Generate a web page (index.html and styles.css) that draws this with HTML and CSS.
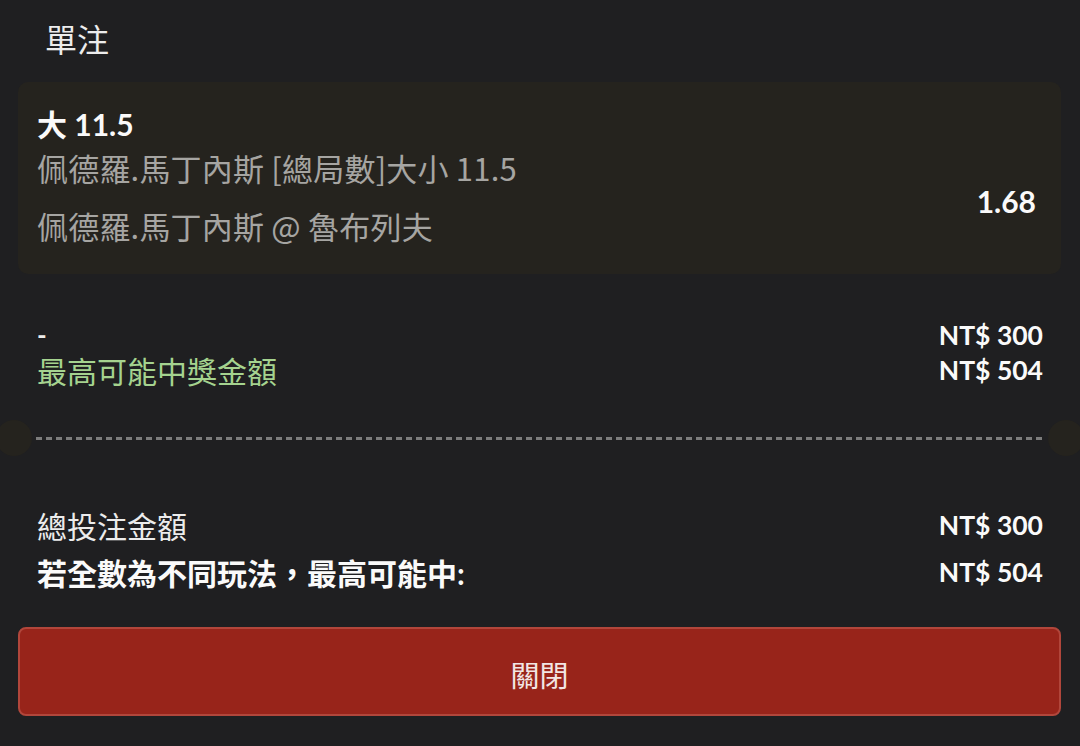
FILE: index.html
```html
<!DOCTYPE html>
<html lang="zh-Hant">
<head>
    <meta charset="UTF-8">
    <meta name="viewport" content="width=device-width, initial-scale=1.0">
    <title>單注</title>
    <link rel="stylesheet" href="styles.css">
</head>
<body>
    <div class="sheet">
        <h1 class="sheet-title">單注</h1>

        <div class="bet-card">
            <div class="bet-pick">大 11.5</div>
            <div class="bet-body">
                <div class="bet-info">
                    <p class="bet-market">佩德羅.馬丁內斯 [總局數]大小 11.5</p>
                    <p class="bet-event">佩德羅.馬丁內斯 @ 魯布列夫</p>
                </div>
                <div class="bet-odds">1.68</div>
            </div>
        </div>

        <div class="summary">
            <div class="row">
                <span class="dash">-</span>
                <span class="amount">NT$ 300</span>
            </div>
            <div class="row">
                <span class="win-label">最高可能中獎金額</span>
                <span class="amount">NT$ 504</span>
            </div>
        </div>

        <div class="divider">
            <span class="notch notch-left"></span>
            <span class="divider-line"></span>
            <span class="notch notch-right"></span>
        </div>

        <div class="totals">
            <div class="total-row">
                <span>總投注金額</span>
                <span class="amount">NT$ 300</span>
            </div>
            <div class="total-row">
                <span class="strong">若全數為不同玩法<span class="punct">，</span>最高可能中:</span>
                <span class="amount">NT$ 504</span>
            </div>
        </div>

        <button class="close-btn" type="button">關閉</button>
    </div>
</body>
</html>
```

FILE: styles.css
```css
body {
    margin: 0;
    background-color: #1f1f21;
    font-family: "Lato", "Noto Sans CJK TC", sans-serif;
    color: #ececec;
    overflow: hidden;
}

.sheet {
    width: 1080px;
    height: 746px;
}

.sheet-title {
    margin: 0 0 22px;
    padding: 20px 0 0 45px;
    font-size: 32px;
    font-weight: normal;
    line-height: 40px;
    color: #ececec;
}

.bet-card {
    margin: 0 19px 0 18px;
    padding: 22px 25px 24px 19px;
    background-color: #25231e;
    border-radius: 10px;
}

.bet-pick {
    font-size: 30px;
    font-weight: bold;
    line-height: 40px;
    color: #fafafa;
}

.bet-body {
    display: flex;
    align-items: center;
    justify-content: space-between;
}

.bet-info p {
    margin: 0;
    font-family: "Noto Sans CJK TC", sans-serif;
    font-size: 31px;
    letter-spacing: 0.2px;
    line-height: 48px;
    color: #a6a5a2;
}

.bet-info .bet-event {
    margin-top: 10px;
}

.bet-odds {
    padding-top: 8px;
    font-size: 30px;
    font-weight: bold;
    color: #fafafa;
}

.summary {
    margin-top: 43px;
    padding: 0 37px;
}

.row, .total-row {
    display: flex;
    justify-content: space-between;
    align-items: center;
}

.row {
    height: 36px;
    font-size: 30px;
}

.row + .row {
    margin-top: -1px;
}

.total-row {
    height: 47px;
    font-size: 30px;
}

.dash {
    font-weight: bold;
    font-size: 26px;
}

.win-label {
    color: #a5d38f;
}

.amount {
    font-size: 26.5px;
    font-weight: bold;
    color: #fafafa;
}

.divider {
    display: flex;
    align-items: center;
    height: 36px;
    margin-top: 32px;
}

.notch {
    flex: none;
    width: 36px;
    height: 36px;
    border-radius: 50%;
    background-color: #25231e;
}

.notch-left {
    margin-left: -4px;
}

.notch-right {
    margin-right: -4px;
}

.divider-line {
    flex: 1;
    height: 3px;
    margin: 0 4px;
    background: repeating-linear-gradient(to right, #7c7c7c 0, #7c7c7c 6px, transparent 6px, transparent 10px);
}

.totals {
    margin-top: 45px;
    padding: 0 37px;
}

.strong {
    font-weight: bold;
    color: #fafafa;
}

.punct {
    font-family: "Noto Sans CJK JP", sans-serif;
}

.close-btn {
    display: block;
    width: 1043px;
    height: 89px;
    margin: 32px 0 0 18px;
    padding: 4px 0 0;
    background-color: #98241a;
    border: 2px solid #b1463b;
    border-radius: 8px;
    font-family: "Lato", "Noto Sans CJK TC", sans-serif;
    font-size: 29px;
    color: #f2e6e4;
}
```
